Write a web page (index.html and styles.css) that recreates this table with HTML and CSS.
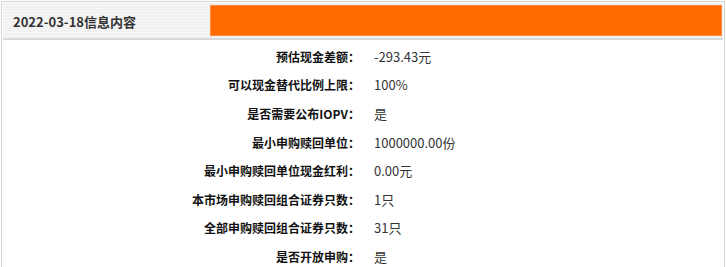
FILE: index.html
```html
<!DOCTYPE html>
<html lang="zh-CN">
  <head>
    <meta charset="UTF-8" />
    <title>2022-03-18信息内容</title>
    <link rel="stylesheet" href="styles.css">
  </head>
  <body>
    <div class="panel">
      <div class="panel-head">
        <div class="panel-title">2022-03-18信息内容</div>
        <div class="panel-bar"></div>
      </div>

      <!-- 信息列表 -->
      <table class="info-table">
        <tbody>
          <tr><th>预估现金差额：</th><td>-293.43元</td></tr>
          <tr><th>可以现金替代比例上限：</th><td>100%</td></tr>
          <tr><th>是否需要公布IOPV：</th><td>是</td></tr>
          <tr><th>最小申购赎回单位：</th><td>1000000.00份</td></tr>
          <tr><th>最小申购赎回单位现金红利：</th><td>0.00元</td></tr>
          <tr><th>本市场申购赎回组合证券只数：</th><td>1只</td></tr>
          <tr><th>全部申购赎回组合证券只数：</th><td>31只</td></tr>
          <tr><th>是否开放申购：</th><td>是</td></tr>
        </tbody>
      </table>
    </div>
  </body>
</html>
```

FILE: styles.css
```css
* {
  margin: 0;
  padding: 0;
  box-sizing: border-box;
}

body {
  font-family: "Noto Sans CJK SC", "Liberation Sans", sans-serif;
  font-size: 13px;
  color: #333;
  background: #fff;
  padding: 1px 1px 0 1px;
}

.panel {
  border: 1px solid #d4d4d4;
  border-bottom: none;
  height: 266px;
}

.panel-head {
  display: flex;
  height: 37px;
  margin: 1px;
  padding: 2px 1px 2px 0;
  background: repeating-linear-gradient(
    to bottom,
    #f1f1f1 0,
    #f1f1f1 2px,
    #f7f7f7 2px,
    #f7f7f7 3px
  ); /* garis halus di header */
  border-bottom: 2px solid #d9d9d9;
}

.panel-title {
  width: 207px;
  padding-left: 10px;
  line-height: 33px;
  font-weight: bold;
  color: #333;
}

.panel-bar {
  flex: 1;
  background-color: #ff6a00;
  border: 1px solid #ff8a3d;
}

.info-table {
  width: 100%;
  border-collapse: collapse;
  margin-top: 2px;
}

.info-table th,
.info-table td {
  height: 28.6px;
  vertical-align: middle;
  white-space: nowrap;
}

.info-table th {
  width: 358px;
  text-align: right;
  font-size: 12px;
  font-weight: bold;
  color: #111;
}

.info-table td {
  text-align: left;
  padding-left: 14px;
  color: #333;
}
```
